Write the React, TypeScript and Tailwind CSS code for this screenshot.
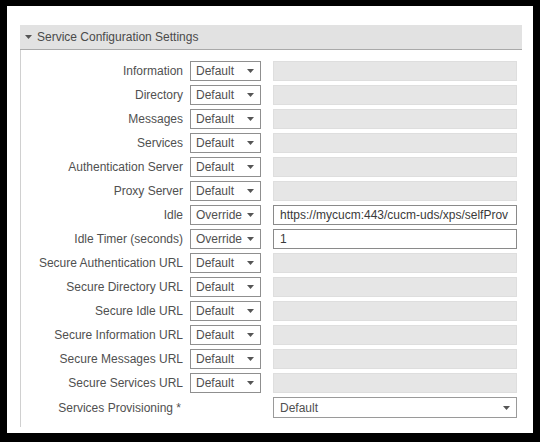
const rows: { label: string; mode: string; value?: string }[] = [
  { label: "Information", mode: "Default" },
  { label: "Directory", mode: "Default" },
  { label: "Messages", mode: "Default" },
  { label: "Services", mode: "Default" },
  { label: "Authentication Server", mode: "Default" },
  { label: "Proxy Server", mode: "Default" },
  { label: "Idle", mode: "Override", value: "https://mycucm:443/cucm-uds/xps/selfProv" },
  { label: "Idle Timer (seconds)", mode: "Override", value: "1" },
  { label: "Secure Authentication URL", mode: "Default" },
  { label: "Secure Directory URL", mode: "Default" },
  { label: "Secure Idle URL", mode: "Default" },
  { label: "Secure Information URL", mode: "Default" },
  { label: "Secure Messages URL", mode: "Default" },
  { label: "Secure Services URL", mode: "Default" },
];

const Caret = () => (
  <svg width="7" height="4" viewBox="0 0 7 4" className="shrink-0">
    <path d="M0 0 L7 0 L3.5 4 Z" fill="#555" />
  </svg>
);

const SettingRow = ({ label, mode, value }: { label: string; mode: string; value?: string }) => {
  const override = mode === "Override";
  return (
    <div className="flex items-center h-[20px]">
      <div className="w-[163px] pr-[1px] text-right text-[12px] text-[#505050] whitespace-nowrap">{label}</div>
      <div className="ml-[6px] w-[71px] h-[20px] border border-[#8f8f8f] bg-white flex items-center justify-between pl-[5px] pr-[6px] text-[12px] text-[#505050]">
        <span>{mode}</span>
        <Caret />
      </div>
      {override ? (
        <div className="ml-[12px] w-[244px] h-[20px] border border-[#8a8a8a] bg-white flex items-center px-[6px] text-[12px] text-[#3a3a3a] whitespace-nowrap overflow-hidden">
          {value}
        </div>
      ) : (
        <div className="ml-[12px] w-[244px] h-[20px] border border-[#dedede] bg-[#e6e6e6]" />
      )}
    </div>
  );
};

export default function App() {
  return (
    <div
      className="w-[540px] h-[442px] bg-black pt-[6px] pl-[7px] pr-[7px] pb-[9px]"
      style={{ fontFamily: '"Liberation Sans", Arial, sans-serif' }}
    >
      <div className="w-full h-full bg-white pt-[19px] pl-[13px]">
        <div className="w-[502px]">
          <div className="h-[25px] bg-[#e2e2e2] border-b border-[#a9a9a9] flex items-center pl-[5px] text-[12px] text-[#4a4a4a]">
            <Caret />
            <span className="ml-[5px]">Service Configuration Settings</span>
          </div>
          <div className="border-l border-[#d0d0d0] pt-[11px] pb-[9px] flex flex-col gap-[4px]">
            {rows.map((r) => (
              <SettingRow key={r.label} label={r.label} mode={r.mode} value={r.value} />
            ))}
            <div className="flex items-center h-[21px]">
              <div className="w-[160px] text-right text-[12px] text-[#505050] whitespace-nowrap">Services Provisioning *</div>
              <div className="ml-[92px] w-[244px] h-[21px] border border-[#9a9a9a] bg-white flex items-center justify-between pl-[6px] pr-[6px] text-[12px] text-[#505050]">
                <span>Default</span>
                <Caret />
              </div>
            </div>
          </div>
        </div>
      </div>
    </div>
  );
}
